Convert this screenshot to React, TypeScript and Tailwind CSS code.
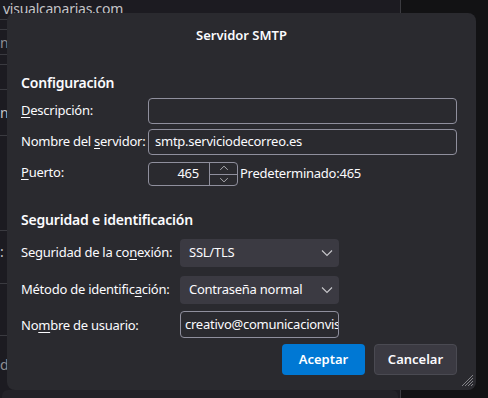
import React from 'react';

const font = { fontFamily: '"Noto Sans", "Open Sans", sans-serif' };

const Chevron: React.FC<{ className?: string }> = ({ className }) => (
  <svg width="12" height="8" viewBox="0 0 12 8" className={className} fill="none">
    <path d="M1 1.5 L6 6.5 L11 1.5" stroke="#c8c8cc" strokeWidth="1.1" />
  </svg>
);

const Label: React.FC<{ pre: string; key_: string; post: string }> = ({ pre, key_, post }) => (
  <span className="whitespace-nowrap">
    {pre}
    <span className="underline underline-offset-2">{key_}</span>
    {post}
  </span>
);

const Background: React.FC = () => (
  <div className="flex h-[398px] w-[488px] bg-[#121214]">
    <div className="flex w-[401px] flex-col border-r border-[#3b3b40] bg-[#1c1b21]">
      <div className="h-[20px] border-b border-[#3a3a40] pl-[3px] text-[14px] leading-[17px] text-[#c4c4c8]">visualcanarias.com</div>
      <div className="h-[10px] border-b border-[#3a3a40]" />
      <div className="h-[25px] border-b border-[#3a3a40] pl-0 text-[14px] leading-[25px] text-[#8e8e94]">nc</div>
      <div className="h-[10px] border-b border-[#3a3a40]" />
      <div className="h-[25px] border-b border-[#3a3a40]" />
      <div className="h-[46px] border-b border-[#3a3a40] text-[14px] leading-[46px] text-[#c4c4c8]">n</div>
      <div className="h-[95px] border-b border-[#3a3a40]" />
      <div className="h-[53px] border-b border-[#3a3a40] text-[14px] leading-[42px] text-[#c4c4c8]">:</div>
      <div className="h-[52px] border-b border-[#3a3a40]" />
      <div className="h-[54px] text-[14px] leading-[58px] text-[#8e8e94]">d</div>
      <div className="mx-[2px] flex-1 rounded-t-md bg-[#232228]" />
    </div>
  </div>
);

export default function App() {
  return (
    <div className="relative h-[398px] w-[488px] overflow-hidden text-[13px] tracking-[-0.25px] text-[#fbfbfe]" style={font}>
      <Background />
      <div className="absolute left-[7px] top-[13px] flex h-[377px] w-[469px] flex-col rounded-lg bg-[#2a2a2f] pl-[14px] pr-[19px]">
        <div className="mt-[12px] pl-[5px] text-center text-[13px] font-semibold leading-[20px] tracking-normal">Servidor SMTP</div>

        <div className="mt-[28px] text-[14px] font-semibold leading-[20px] tracking-[-0.2px]">Configuración</div>
        <div className="mt-[5px] grid grid-cols-[127px_1fr] items-center gap-y-[5px]">
          <Label pre="" key_="D" post="escripción:" />
          <div className="h-[26px] rounded border border-[#8f8f9d]" />
          <Label pre="Nombre del " key_="s" post="ervidor:" />
          <div className="flex h-[26px] items-center rounded border border-[#8f8f9d] px-[6px]">smtp.serviciodecorreo.es</div>
          <Label pre="" key_="P" post="uerto:" />
          <div className="mt-[2px] flex items-center">
            <div className="flex h-[24px] w-[90px] rounded border border-[#8f8f9d]">
              <div className="flex flex-1 items-center justify-end pr-[10px]">465</div>
              <div className="flex w-[28px] flex-col border-l border-[#8f8f9d]">
                <div className="flex flex-1 items-center justify-center border-b border-[#8f8f9d]">
                  <Chevron className="rotate-180 scale-75" />
                </div>
                <div className="flex flex-1 items-center justify-center">
                  <Chevron className="scale-75" />
                </div>
              </div>
            </div>
            <span className="ml-[2px]">Predeterminado:465</span>
          </div>
        </div>

        <div className="mt-[24px] text-[14px] font-semibold leading-[20px] tracking-[-0.2px]">Seguridad e identificación</div>
        <div className="mt-[9px] grid grid-cols-[159px_159px] items-center gap-y-[9px]">
          <Label pre="Seguridad de la co" key_="n" post="exión:" />
          <div className="flex h-[28px] items-center justify-between rounded bg-[#3b3a42] pl-[9px] pr-[6px]">
            <span>SSL/TLS</span>
            <Chevron />
          </div>
          <Label pre="Método de identific" key_="a" post="ción:" />
          <div className="flex h-[28px] items-center justify-between rounded bg-[#3b3a42] pl-[9px] pr-[6px]">
            <span>Contraseña normal</span>
            <Chevron />
          </div>
          <Label pre="No" key_="m" post="bre de usuario:" />
          <div className="-mt-[2px] flex h-[27px] items-center overflow-hidden whitespace-nowrap rounded border border-[#8f8f9d] px-[4px]">
            creativo@comunicacionvisual
          </div>
        </div>

        <div className="mt-[6px] flex justify-end gap-[9px] tracking-normal">
          <button className="h-[31px] w-[83px] rounded bg-[#0078d4] font-semibold text-white">Aceptar</button>
          <button className="h-[31px] w-[83px] rounded border border-[#4a4a52] bg-[#3b3a42] font-semibold text-[#fbfbfe]">Cancelar</button>
        </div>

        <svg className="absolute bottom-[3px] right-[2px]" width="12" height="12" viewBox="0 0 12 12">
          <path d="M11 3 L3 11 M11 6 L6 11 M11 9 L9 11 M11 0 L0 11" stroke="#9a9aa0" strokeWidth="0.8" />
        </svg>
      </div>
    </div>
  );
}
